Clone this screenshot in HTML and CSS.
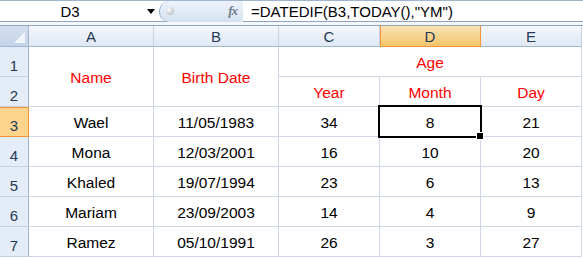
FILE: index.html
```html
<!DOCTYPE html>
<html lang="en">
<head>
    <meta charset="UTF-8">
    <title>DATEDIF Age</title>
    <link rel="stylesheet" href="styles.css">
</head>
<body>
    <div class="formula-bar">
        <div class="name-box">D3</div>
        <div class="name-drop">
            <svg width="8" height="5" viewBox="0 0 8 5"><path d="M0 0 H8 L4 5 Z" fill="#000"/></svg>
        </div>
        <div class="fx-pill">
            <span class="ball"></span>
            <span class="fx">fx</span>
        </div>
        <div class="formula">=DATEDIF(B3,TODAY(),"YM")</div>
    </div>
    <div class="bar-gap"></div>

    <div class="sheet">
        <!-- column headers -->
        <div class="corner"><span class="corner-tri"></span></div>
        <div class="col-head">A</div>
        <div class="col-head">B</div>
        <div class="col-head">C</div>
        <div class="col-head selected">D</div>
        <div class="col-head">E</div>

        <!-- rows 1-2: titles -->
        <div class="row-head">1</div>
        <div class="cell title tall">Name</div>
        <div class="cell title tall">Birth Date</div>
        <div class="cell title wide">Age</div>

        <div class="row-head">2</div>
        <div class="cell title">Year</div>
        <div class="cell title">Month</div>
        <div class="cell title">Day</div>

        <!-- data -->
        <div class="row-head selected">3</div>
        <div class="cell">Wael</div>
        <div class="cell">11/05/1983</div>
        <div class="cell">34</div>
        <div class="cell active">8</div>
        <div class="cell">21</div>

        <div class="row-head">4</div>
        <div class="cell">Mona</div>
        <div class="cell">12/03/2001</div>
        <div class="cell">16</div>
        <div class="cell">10</div>
        <div class="cell">20</div>

        <div class="row-head">5</div>
        <div class="cell">Khaled</div>
        <div class="cell">19/07/1994</div>
        <div class="cell">23</div>
        <div class="cell">6</div>
        <div class="cell">13</div>

        <div class="row-head">6</div>
        <div class="cell">Mariam</div>
        <div class="cell">23/09/2003</div>
        <div class="cell">14</div>
        <div class="cell">4</div>
        <div class="cell">9</div>

        <div class="row-head">7</div>
        <div class="cell">Ramez</div>
        <div class="cell">05/10/1991</div>
        <div class="cell">26</div>
        <div class="cell">3</div>
        <div class="cell">27</div>
    </div>
</body>
</html>
```

FILE: styles.css
```css
* {
    margin: 0;
    padding: 0;
    box-sizing: border-box;
}

body {
    width: 583px;
    height: 259px;
    overflow: hidden;
    background-color: #ffffff;
    font-family: "Liberation Sans", Arial, sans-serif;
}

/* formula bar */

.formula-bar {
    height: 22px;
    display: flex;
    align-items: center;
    border-top: 1px solid #9fb4cf;
    border-bottom: 1px solid #8da3c0;
    background-color: white;
}

.name-box {
    width: 140px;
    text-align: center;
    font-size: 15px;
    color: #000;
}

.name-drop {
    width: 19px;
    height: 100%;
    display: flex;
    align-items: center;
    justify-content: center;
    padding-left: 2px;
}

.fx-pill {
    width: 84px;
    height: 21px;
    display: flex;
    align-items: center;
    justify-content: space-between;
    padding: 0 6px 0 6px;
    border-radius: 10px 0 0 10px;
    border-left: 1px solid #97acc8;
    background: linear-gradient(#eef3fa, #d5e1f0);
}

.ball {
    width: 8px;
    height: 8px;
    border-radius: 50%;
    background: radial-gradient(circle at 35% 35%, #ffffff, #a9adb3);
}

.fx {
    font-family: "Liberation Serif", serif;
    font-style: italic;
    font-weight: bold;
    font-size: 13px;
    color: #6f7c8c;
    letter-spacing: -1px;
}

.formula {
    padding-left: 8px;
    font-size: 15px;
    color: #000;
    white-space: nowrap;
}

.bar-gap {
    height: 4px;
    background-color: #f4f7fb;
    border-bottom: 1px solid #8da3c0;
}

/* sheet grid */

.sheet {
    display: grid;
    grid-template-columns: 29px 125px 125px 101px 101px 101px;
    grid-template-rows: 21px repeat(7, 30px);
    width: 582px;
}

.corner {
    position: relative;
    background: linear-gradient(#d4dfef, #c3d3e8);
    border-right: 1px solid #9eb6ce;
    border-bottom: 1px solid #9eb6ce;
}

.corner-tri {
    position: absolute;
    right: 3px;
    bottom: 3px;
    width: 0;
    height: 0;
    border-left: 11px solid transparent;
    border-bottom: 11px solid #f2f5fa;
}

.col-head {
    display: flex;
    align-items: center;
    justify-content: center;
    font-size: 15px;
    color: #243a55;
    background: linear-gradient(#f4f7fc, #e0e8f3);
    border-right: 1px solid #c5d2e3;
    border-bottom: 1px solid #9eb6ce;
}

.col-head.selected {
    background: linear-gradient(#fae2b4, #f2c56b);
    border-right-color: #f29536;
    border-bottom-color: #f29536;
    box-shadow: inset 1px 0 0 #f29536;
}

.row-head {
    display: flex;
    align-items: flex-end;
    justify-content: center;
    padding-bottom: 2px;
    font-size: 15px;
    color: #243a55;
    background-color: #e4ecf7;
    border-right: 1px solid #9eb6ce;
    border-bottom: 1px solid #c5d2e3;
}

.row-head.selected {
    background-color: #ffd58d;
    border-right-color: #f29536;
    border-bottom-color: #f29536;
    box-shadow: inset 0 1px 0 #f29536;
}

.cell {
    display: flex;
    align-items: center;
    justify-content: center;
    padding-top: 2px;
    font-size: 15.5px;
    color: #000;
    background-color: white;
    border-right: 1px solid #d0d7e5;
    border-bottom: 1px solid #d0d7e5;
}

.cell.title {
    color: #ff0000;
}

.cell.tall {
    grid-row: span 2;
}

.cell.wide {
    grid-column: span 3;
}

.cell.active {
    position: relative;
}

.cell.active::after {
    content: "";
    position: absolute;
    top: -2px;
    left: -2px;
    right: -2px;
    bottom: -2px;
    border: 2px solid #000;
}

.cell.active::before {
    content: "";
    position: absolute;
    right: -4px;
    bottom: -4px;
    width: 6px;
    height: 6px;
    background-color: #000;
    border: 1px solid #fff;
    z-index: 2;
}
```
